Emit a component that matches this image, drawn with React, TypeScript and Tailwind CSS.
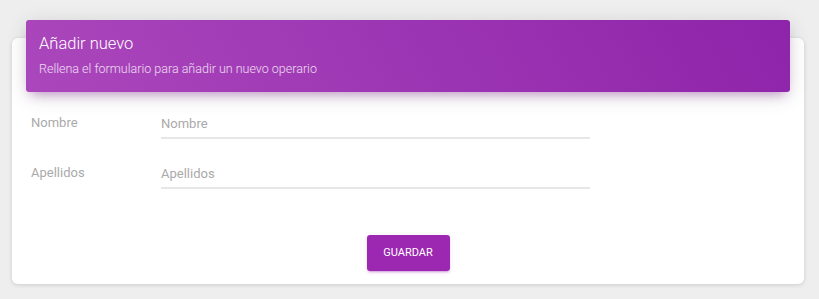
import React from "react";

export default function App() {
  return (
    <div className="w-[819px] h-[299px] bg-[#eeeeee] overflow-hidden pt-[38px] pl-[12px]" style={{ fontFamily: "Roboto, 'Noto Sans', sans-serif" }}>
      <div className="w-[792px] h-[246px] bg-white rounded-[6px] shadow-[0_1px_4px_0_rgba(0,0,0,0.14)] flex flex-col">
        <div className="mx-[14px] -mt-[18px] h-[72px] rounded-[3px] bg-[linear-gradient(60deg,#ab47bc,#8e24aa)] shadow-[0_4px_20px_0_rgba(0,0,0,0.14),0_7px_10px_-5px_rgba(156,39,176,0.4)] px-[13px] pt-[13px] text-white">
          <div className="text-[16.5px] font-light leading-[22px]">Añadir nuevo</div>
          <div className="text-[12.5px] font-light leading-[16px] mt-[6px] text-white/80">Rellena el formulario para añadir un nuevo operario</div>
        </div>
        <div className="flex flex-col pl-[19px] mt-[21px]">
          <div className="flex items-start h-[50px]">
            <div className="w-[130px] text-[13px] text-[#aaaaaa] leading-[18px] pt-[1px]">Nombre</div>
            <div className="w-[429px] h-[26px] border-b-2 border-[#e6e6e6] text-[13px] text-[#aaaaaa] leading-[18px] pt-[2px]">Nombre</div>
          </div>
          <div className="flex items-start h-[50px]">
            <div className="w-[130px] text-[13px] text-[#aaaaaa] leading-[18px] pt-[1px]">Apellidos</div>
            <div className="w-[429px] h-[26px] border-b-2 border-[#e6e6e6] text-[13px] text-[#aaaaaa] leading-[18px] pt-[2px]">Apellidos</div>
          </div>
        </div>
        <div className="flex justify-center mt-[22px]">
          <button className="w-[83px] h-[36px] rounded-[3px] bg-[#9c27b0] text-white text-[11px] uppercase shadow-[0_2px_2px_0_rgba(156,39,176,0.14),0_3px_1px_-2px_rgba(156,39,176,0.2),0_1px_5px_0_rgba(156,39,176,0.12)]">Guardar</button>
        </div>
      </div>
    </div>
  );
}
